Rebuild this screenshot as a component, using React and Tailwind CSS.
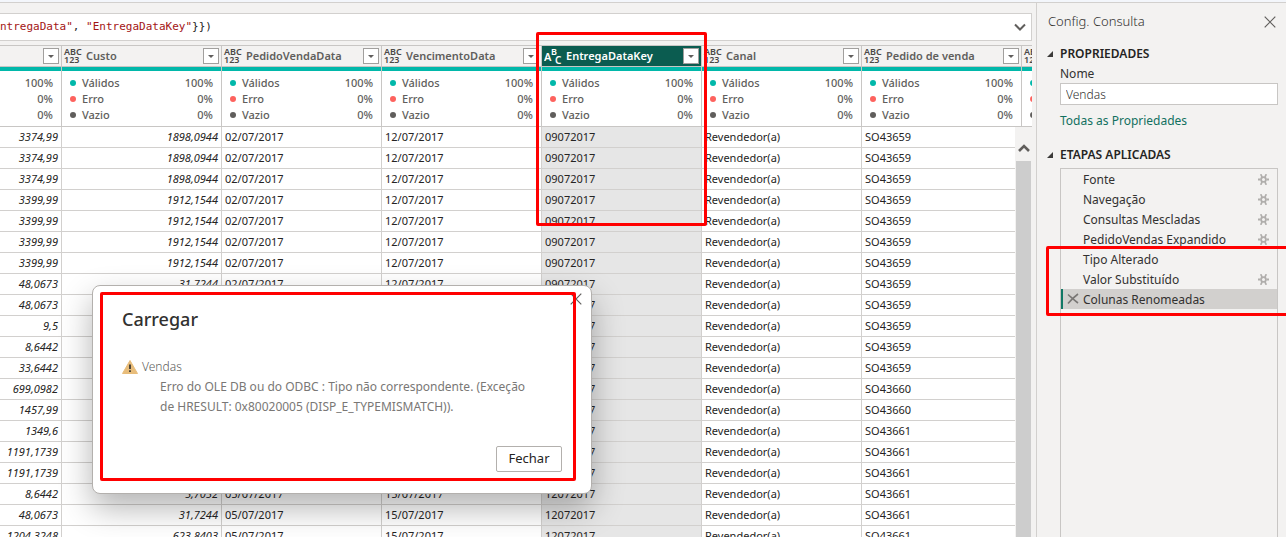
const OK_DATES = ['02/07/2017', '12/07/2017', '09072017']
const LATE_DATES = ['05/07/2017', '15/07/2017', '12072017']

const ROWS = [
  ['3374,99', '1898,0944', ...OK_DATES, 'SO43659'],
  ['3374,99', '1898,0944', ...OK_DATES, 'SO43659'],
  ['3374,99', '1898,0944', ...OK_DATES, 'SO43659'],
  ['3399,99', '1912,1544', ...OK_DATES, 'SO43659'],
  ['3399,99', '1912,1544', ...OK_DATES, 'SO43659'],
  ['3399,99', '1912,1544', ...OK_DATES, 'SO43659'],
  ['3399,99', '1912,1544', ...OK_DATES, 'SO43659'],
  ['48,0673', '31,7244', ...OK_DATES, 'SO43659'],
  ['48,0673', '31,7244', ...OK_DATES, 'SO43659'],
  ['9,5', '5,7052', ...OK_DATES, 'SO43659'],
  ['8,6442', '5,7052', ...OK_DATES, 'SO43659'],
  ['33,6442', '', ...OK_DATES, 'SO43659'],
  ['699,0982', '', ...OK_DATES, 'SO43660'],
  ['1457,99', '', ...OK_DATES, 'SO43660'],
  ['1349,6', '', ...OK_DATES, 'SO43661'],
  ['1191,1739', '', ...OK_DATES, 'SO43661'],
  ['1191,1739', '', ...OK_DATES, 'SO43661'],
  ['8,6442', '5,7052', ...LATE_DATES, 'SO43661'],
  ['48,0673', '31,7244', ...LATE_DATES, 'SO43661'],
  ['1204,3248', '623,8403', ...LATE_DATES, 'SO43661'],
]

const COLUMNS = [
  { name: 'Custo' },
  { name: 'PedidoVendaData' },
  { name: 'VencimentoData' },
  { name: 'EntregaDataKey', text: true },
  { name: 'Canal' },
  { name: 'Pedido de venda' },
]

const STEPS = [
  { name: 'Fonte', gear: true },
  { name: 'Navegação', gear: true },
  { name: 'Consultas Mescladas', gear: true },
  { name: 'PedidoVendas Expandido', gear: true },
  { name: 'Tipo Alterado' },
  { name: 'Valor Substituído', gear: true },
  { name: 'Colunas Renomeadas', selected: true },
]

function AnyTypeIcon() {
  return (
    <span className="flex w-5 shrink-0 flex-col text-[9px] leading-[8px] font-semibold text-[#4a4846]">
      <span>ABC</span>
      <span>123</span>
    </span>
  )
}

function TextTypeIcon() {
  return (
    <svg viewBox="0 0 20 20" className="h-5 w-5 shrink-0 fill-white font-semibold" aria-hidden="true">
      <text x="0" y="15" fontSize="11">A</text>
      <text x="7" y="9" fontSize="9">B</text>
      <text x="11" y="18" fontSize="10">C</text>
    </svg>
  )
}

function FilterButton() {
  return (
    <button aria-label="Filtrar" className="ml-auto flex h-4 w-4 shrink-0 items-center justify-center border border-[#a19f9d] bg-white">
      <svg viewBox="0 0 6 3" className="h-[3px] w-[6px] fill-[#605e5c]"><path d="M0 0h6L3 3z" /></svg>
    </button>
  )
}

function CloseIcon({ className }) {
  return (
    <svg viewBox="0 0 12 12" className={className} fill="none" stroke="currentColor" strokeWidth="1.2" aria-hidden="true">
      <path d="M.7.7l10.6 10.6M11.3.7L.7 11.3" />
    </svg>
  )
}

function GearIcon() {
  return (
    <svg viewBox="0 0 11 11" className="h-[11px] w-[11px]" fill="none" stroke="#b0aeac" aria-hidden="true">
      <circle cx="5.5" cy="5.5" r="2.4" strokeWidth="1.8" />
      <path d="M0 5.5h2.5M8.5 5.5H11" strokeWidth="2" />
      <path d="M2.7.2l1.4 3M8.3.2l-1.4 3M2.7 10.8l1.4-3M8.3 10.8l-1.4-3" strokeWidth="1.7" />
    </svg>
  )
}

function HeaderCell({ column }) {
  return (
    <th
      className={`h-[22px] border-y border-r border-[#c8c6c4] p-0 font-semibold ${
        column?.text ? 'bg-[#0b5c50] text-white' : 'bg-[#f3f2f1] text-[#605e5c]'
      }`}
    >
      <div className="flex h-5 items-center pr-[2px] pl-[2px]">
        {column && (column.text ? <TextTypeIcon /> : <AnyTypeIcon />)}
        {column && <span className="pl-[2px] text-[11px] leading-4 whitespace-nowrap">{column.name}</span>}
        <FilterButton />
      </div>
    </th>
  )
}

function Quality({ label, color, value }) {
  return (
    <div className="flex h-4 items-center">
      {label && <span className={`mr-[6px] h-[6px] w-[6px] rounded-full ${color}`} />}
      {label && <span>{label}</span>}
      <span className="ml-auto">{value}</span>
    </div>
  )
}

function QualityCell({ compact }) {
  return (
    <td className="h-[60px] border-r border-b border-[#c8c6c4] bg-white p-0 align-top text-[11px] font-medium text-[#605e5c]">
      <div className="h-1 bg-[#01b8aa]" />
      <div className="pt-1 pr-2 pl-2">
        <Quality label={!compact && 'Válidos'} color="bg-[#01b8aa]" value="100%" />
        <Quality label={!compact && 'Erro'} color="bg-[#fd625e]" value="0%" />
        <Quality label={!compact && 'Vazio'} color="bg-[#605e5c]" value="0%" />
      </div>
    </td>
  )
}

function Grid() {
  const cell = 'h-[21px] overflow-hidden border-r border-b border-[#d2d0ce] px-[3px] py-0 leading-5 whitespace-nowrap'
  return (
    <div className="relative mt-1 min-h-0 flex-1 overflow-hidden">
      <table className="w-full table-fixed border-separate border-spacing-0 text-left text-[11px] text-[#252423]">
        <colgroup>
          <col className="w-[62px]" />
          {COLUMNS.map((c) => <col key={c.name} className="w-[160px]" />)}
          <col />
        </colgroup>
        <thead>
          <tr>
            <HeaderCell />
            {COLUMNS.map((c) => <HeaderCell key={c.name} column={c} />)}
            <th className="overflow-hidden border-y border-[#c8c6c4] bg-[#f3f2f1] p-0 pl-[2px]"><AnyTypeIcon /></th>
          </tr>
          <tr>
            <QualityCell compact />
            {COLUMNS.map((c) => <QualityCell key={c.name} />)}
            <td className="overflow-hidden border-b border-[#c8c6c4] bg-white p-0 align-top">
              <div className="h-1 bg-[#01b8aa]" />
              <div className="flex flex-col gap-[10px] pt-[9px] pl-2">
                <span className="h-[6px] w-[6px] rounded-full bg-[#01b8aa]" />
                <span className="h-[6px] w-[6px] rounded-full bg-[#fd625e]" />
                <span className="h-[6px] w-[6px] rounded-full bg-[#605e5c]" />
              </div>
            </td>
          </tr>
        </thead>
        <tbody className="bg-white">
          {ROWS.map(([unit, cost, ordered, due, key, order], i) => (
            <tr key={i}>
              <td className={`${cell} text-right italic`}>{unit}</td>
              <td className={`${cell} text-right italic`}>{cost}</td>
              <td className={cell}>{ordered}</td>
              <td className={cell}>{due}</td>
              <td className={`${cell} bg-[#e6e6e6]`}>{key}</td>
              <td className={cell}>Revendedor(a)</td>
              <td className={cell}>{order}</td>
              <td className={cell} />
            </tr>
          ))}
        </tbody>
      </table>

      {/* Vertical scrollbar */}
      <div className="absolute top-[82px] right-0 bottom-0 flex w-[17px] flex-col bg-[#f3f2f1] pr-px pl-px">
        <div className="flex h-[34px] items-end justify-center pb-[9px]">
          <svg viewBox="0 0 12 8" className="h-2 w-3" fill="none" stroke="#605e5c" strokeWidth="2.6"><path d="M1 7l5-5 5 5" /></svg>
        </div>
        <div className="flex-1 bg-[#cdcdcd]" />
      </div>
    </div>
  )
}

function FormulaBar() {
  return (
    <div className="flex h-7 shrink-0 items-center overflow-hidden border border-l-0 border-[#d2d0ce] bg-white pr-[5px]">
      <code className="font-['DejaVu_Sans_Mono',monospace] text-[11px] whitespace-pre text-[#252423]">
        <span className="text-[#a31515]">ntregaData"</span>, <span className="text-[#a31515]">"EntregaDataKey"</span>{'}})'}
      </code>
      <button aria-label="Expandir" className="ml-auto">
        <svg viewBox="0 0 12 8" className="h-2 w-3" fill="none" stroke="#605e5c" strokeWidth="2"><path d="M1 1.5l5 5 5-5" /></svg>
      </button>
    </div>
  )
}

function SectionTitle({ children }) {
  return (
    <h3 className="flex h-5 items-center gap-[7px] pl-[10px] text-xs font-semibold text-[#252423]">
      <svg viewBox="0 0 6 6" className="h-[6px] w-[6px] fill-[#3b3a39]"><path d="M6 0v6H0z" /></svg>
      {children}
    </h3>
  )
}

function SettingsPane() {
  return (
    <aside className="relative flex w-[250px] shrink-0 flex-col border-l border-[#d2d0ce] text-xs text-[#323130]">
      <div className="flex h-[38px] items-center justify-between pr-[10px] pl-[11px]">
        <h2 className="text-[13px] font-light">Config. Consulta</h2>
        <button aria-label="Fechar painel"><CloseIcon className="h-3 w-3 text-[#605e5c]" /></button>
      </div>

      <div className="pt-[3px]"><SectionTitle>PROPRIEDADES</SectionTitle></div>
      <div className="flex flex-col items-start pr-2 pl-[23px]">
        <label htmlFor="query-name" className="h-[19px] leading-5">Nome</label>
        <input
          id="query-name"
          defaultValue="Vendas"
          className="h-[22px] w-full border border-[#c8c6c4] bg-white px-[5px] text-xs font-light outline-none"
        />
        <a href="#" className="mt-[6px] leading-5 text-[#11705f]">Todas as Propriedades</a>
      </div>

      <div className="pt-[14px]"><SectionTitle>ETAPAS APLICADAS</SectionTitle></div>
      <ul className="mt-[3px] mr-2 ml-[23px] flex-1 border border-b-0 border-[#c8c6c4]">
        {STEPS.map((step) => (
          <li key={step.name} className={`flex h-5 items-center pr-2 ${step.selected ? 'border-l-2 border-[#117865] bg-[#d2d0ce] pl-1' : 'pl-[6px]'}`}>
            <span className="w-4 shrink-0">
              {step.selected && (
                <svg viewBox="0 0 12 12" className="h-3 w-3" fill="none" stroke="#797775" strokeWidth="1.6">
                  <path d="M1 1.5c3 2.5 6 5.5 10 8.5M11 1C7 4 4 7 1 10.5" />
                </svg>
              )}
            </span>
            <button className="pt-[2px] text-left whitespace-nowrap">{step.name}</button>
            {step.gear && <button aria-label="Configurar" className="ml-auto"><GearIcon /></button>}
          </li>
        ))}
      </ul>

      <div className="pointer-events-none absolute top-[243px] -right-1 left-[9px] h-[70px] rounded-xs border-3 border-[#ff0000]" />
    </aside>
  )
}

function ErrorDialog() {
  return (
    <div
      role="dialog"
      aria-labelledby="dialog-title"
      className="absolute top-[285px] left-[92px] w-[500px] rounded-lg border border-[#b3b0ad] bg-white pt-[21px] pr-[29px] pb-[21px] pl-[29px] shadow-[0_14px_32px_rgba(0,0,0,0.3)]"
    >
      <button aria-label="Fechar janela" className="absolute top-[7px] right-[9px]">
        <CloseIcon className="h-3 w-3 text-[#605e5c]" />
      </button>
      <h1 id="dialog-title" className="text-lg leading-6 font-medium text-[#323130]">Carregar</h1>
      <div className="mt-[26px] flex items-center gap-1 text-[#605e5c]">
        <svg viewBox="0 0 16 14" className="h-[14px] w-4">
          <path d="M8 .5L15.5 13.5H.5z" fill="#e8bd7b" stroke="#e8bd7b" strokeLinejoin="round" />
          <path d="M8 4.5v4.5M8 10.2v1.8" stroke="#323130" strokeWidth="1.7" />
        </svg>
        <span className="text-xs leading-5 font-light">Vendas</span>
      </div>
      <p className="pr-6 pl-[38px] text-xs leading-5 text-[#797775]">
        Erro do OLE DB ou do ODBC : Tipo não correspondente. (Exceção de HRESULT: 0x80020005 (DISP_E_TYPEMISMATCH)).
      </p>
      <div className="mt-[29px] flex justify-end">
        <button className="h-[26px] w-[66px] rounded-xs border border-[#b3b0ad] bg-white text-[13px] text-[#252423]">Fechar</button>
      </div>
      <div className="pointer-events-none absolute top-[6px] right-[15px] bottom-3 left-[7px] rounded-xs border-3 border-[#ff0000]" />
    </div>
  )
}

export default function App() {
  return (
    <div className="relative flex h-screen flex-col overflow-hidden bg-[#f3f2f1] font-['Noto_Sans','Open_Sans',sans-serif]">
      <div className="h-[3px] shrink-0 border-b border-[#d2d0ce] bg-[#f3f6fb]" />
      <div className="flex min-h-0 flex-1">
        <main className="flex min-w-0 flex-1 flex-col pt-[10px] pr-1">
          <FormulaBar />
          <Grid />
        </main>
        <SettingsPane />
      </div>
      <div className="pointer-events-none absolute top-[32px] left-[536px] h-[194px] w-[171px] rounded-xs border-3 border-[#ff0000]" />
      <ErrorDialog />
    </div>
  )
}
